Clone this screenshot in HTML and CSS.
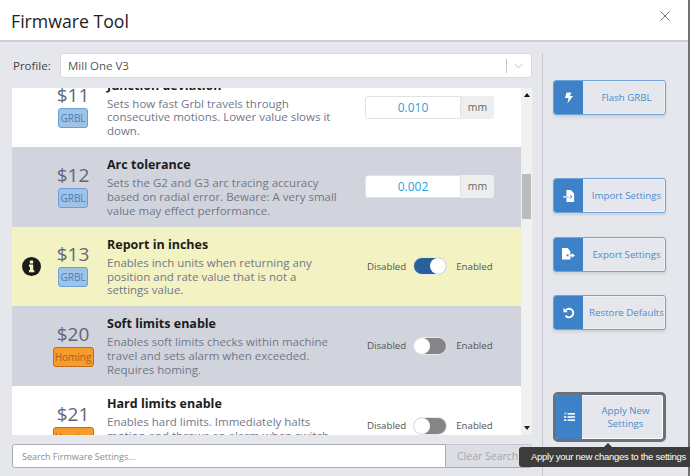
FILE: index.html
```html
<!DOCTYPE html>
<html lang="en">
<head>
<meta charset="utf-8">
<title>Firmware Tool</title>
<link rel="stylesheet" href="styles.css">
</head>
<body>
<div class="window">
  <header class="head">
    <h1>Firmware Tool</h1>
    <svg class="close" viewBox="0 0 11 11" width="10" height="10"><path d="M.5.5l10 10M10.5.5l-10 10" stroke="#666" stroke-width="1" fill="none"/></svg>
  </header>
  <div class="main">
    <section class="left">
      <div class="profile">
        <label>Profile:</label>
        <div class="select">
          <span class="select-text">Mill One V3</span>
          <span class="select-sep"></span>
          <svg viewBox="0 0 10 6" width="9" height="6"><path d="M1 1l4 4 4-4" stroke="#b5b8be" stroke-width="1" fill="none"/></svg>
        </div>
      </div>
      <div class="list">
        <div class="rows">
          <div class="row white">
            <div class="info"></div>
            <div class="code"><span class="num">$11</span><span class="tag grbl">GRBL</span></div>
            <div class="text"><h3>Junction deviation</h3><p>Sets how fast Grbl travels through consecutive motions. Lower value slows it down.</p></div>
            <div class="control"><div class="num-input">0.010</div><div class="unit">mm</div></div>
          </div>
          <div class="row grey">
            <div class="info"></div>
            <div class="code"><span class="num">$12</span><span class="tag grbl">GRBL</span></div>
            <div class="text"><h3>Arc tolerance</h3><p>Sets the G2 and G3 arc tracing accuracy based on radial error. Beware: A very small value may effect performance.</p></div>
            <div class="control"><div class="num-input">0.002</div><div class="unit">mm</div></div>
          </div>
          <div class="row yellow">
            <div class="info"><svg viewBox="0 0 18 18" width="19" height="19"><circle cx="9" cy="9" r="9" fill="#1b1b1b"/><rect x="7.4" y="3.4" width="3.2" height="2.8" rx=".5" fill="#f3f2c2"/><path d="M6.6 7.2h4v5.2h1v2h-5v-2h1v-3.2h-1z" fill="#f3f2c2"/></svg></div>
            <div class="code"><span class="num">$13</span><span class="tag grbl">GRBL</span></div>
            <div class="text"><h3>Report in inches</h3><p>Enables inch units when returning any position and rate value that is not a settings value.</p></div>
            <div class="control switch-row"><span>Disabled</span><span class="switch on"><i></i></span><span>Enabled</span></div>
          </div>
          <div class="row grey">
            <div class="info"></div>
            <div class="code"><span class="num">$20</span><span class="tag homing">Homing</span></div>
            <div class="text"><h3>Soft limits enable</h3><p>Enables soft limits checks within machine travel and sets alarm when exceeded. Requires homing.</p></div>
            <div class="control switch-row"><span>Disabled</span><span class="switch"><i></i></span><span>Enabled</span></div>
          </div>
          <div class="row white">
            <div class="info"></div>
            <div class="code"><span class="num">$21</span><span class="tag homing">Homing</span></div>
            <div class="text"><h3>Hard limits enable</h3><p>Enables hard limits. Immediately halts motion and throws an alarm when switch is triggered.</p></div>
            <div class="control switch-row"><span>Disabled</span><span class="switch"><i></i></span><span>Enabled</span></div>
          </div>
        </div>
        <div class="scrollbar">
          <svg class="arrow-up" viewBox="0 0 6 4" width="6" height="4"><path d="M3 0l3 4H0z" fill="#111"/></svg>
          <div class="thumb"></div>
          <svg class="arrow-down" viewBox="0 0 6 4" width="6" height="4"><path d="M3 4l3-4H0z" fill="#222"/></svg>
        </div>
      </div>
      <div class="search">
        <div class="search-input">Search Firmware Settings...</div>
        <div class="search-clear">Clear Search</div>
      </div>
    </section>
    <aside class="right">
      <button class="btn flash"><span class="ico"><svg viewBox="0 0 10 14" width="8" height="12"><path d="M2 0h6L6.2 4.6H10L3 14l1.4-7H0z" fill="#fff"/></svg></span><span class="lbl">Flash GRBL</span></button>
      <button class="btn import"><span class="ico"><svg viewBox="0 0 14 14" width="12" height="12"><path d="M4 0h5l4 4v10H4V9h4v1.6L11 8 8 5.4V7H4z" fill="#fff"/><path d="M0 7.2h7V5.8L9.6 8 7 10.2V8.8H0z" fill="#fff"/></svg></span><span class="lbl">Import Settings</span></button>
      <button class="btn export"><span class="ico"><svg viewBox="0 0 14 14" width="13" height="13"><path d="M0 0h6l3 3.5V7H4.8v2H9v3.5H0z" fill="#fff"/><path d="M7 6.9h3.6V5.4L14 8l-3.4 2.6V9.1H7z" fill="#fff"/></svg></span><span class="lbl">Export Settings</span></button>
      <button class="btn restore"><span class="ico"><svg viewBox="0 0 14 14" width="12" height="12"><path d="M3.4 3.6A5 5 0 1 1 3 10" stroke="#fff" stroke-width="2.2" fill="none"/><path d="M.6 1v5h5z" fill="#fff"/></svg></span><span class="lbl">Restore Defaults</span></button>
      <button class="btn apply"><span class="ico"><svg viewBox="0 0 14 12" width="11" height="10"><g fill="#fff"><rect x="4.5" y="1" width="9.5" height="2"/><rect x="4.5" y="5" width="9.5" height="2"/><rect x="4.5" y="9" width="9.5" height="2"/><rect x="0" y="5" width="3" height="2"/><rect x="0" y="9" width="3" height="2"/><path d="M0 1.2l1 .8L2.6 0l.7.6L1 3 0 2z"/></g></svg></span><span class="lbl">Apply New Settings</span></button>
    </aside>
  </div>
  <div class="tooltip">Apply your new changes to the settings</div>
</div>
</body>
</html>
```

FILE: styles.css
```css
* { box-sizing: border-box; }
html, body { margin: 0; height: 100%; overflow: hidden; background: #6f7075; }
body { font-family: "Open Sans", sans-serif; color: #222; }
.window { position: relative; width: 688px; height: 476px; display: flex; flex-direction: column; background: #e5e7ec; }
.head { height: 42px; flex: none; background: #fff; border-bottom: 2px solid #cbced4; display: flex; align-items: flex-start; justify-content: space-between; padding: 9px 18px 0 11px; }
.head h1 { margin: 0; font-size: 17.7px; font-weight: 400; line-height: 24px; color: #222; }
.close { margin-top: 2px; }
.main { flex: 1; display: flex; min-height: 0; padding-top: 11px; }
.left { width: 542px; flex: none; padding: 0 10px 0 12px; display: flex; flex-direction: column; }
.profile { height: 25px; display: flex; align-items: center; margin-bottom: 10px; }
.profile label { width: 48px; padding-left: 1px; font-size: 11.5px; color: #444; }
.select { flex: 1; height: 25px; background: #fff; border: 1px solid #d7d9de; border-radius: 3px; display: flex; align-items: center; padding: 0 8px 0 7px; }
.select-text { flex: 1; font-size: 11.5px; color: #555; }
.select-sep { width: 1px; height: 14px; background: #c5c7cc; margin-right: 7px; }
.list { height: 347px; display: flex; overflow: hidden; }
.rows { width: 509px; flex: none; overflow: hidden; }
.rows > .row:first-child { margin-top: -20.6px; }
.row { height: 79.6px; display: flex; align-items: center; }
.white { background: #fff; }
.grey { background: #d1d4dc; }
.yellow { background: #f3f2c2; }
.info { width: 19px; flex: none; margin-left: 10px; display: flex; }
.code { width: 66px; flex: none; display: flex; flex-direction: column; align-items: center; padding: 0 2px 3px 0; }
.num { font-size: 19px; line-height: 25px; color: #5f6776; }
.tag { font-size: 10px; line-height: 18px; height: 20px; border-radius: 3px; border: 1px solid; text-align: center; }
.grbl { width: 30px; background: #9fc2e6; border-color: #6c9fd6; color: #3d82c5; }
.homing { width: 41px; background: #f69b2c; border-color: #c0701a; color: #a5651a; }
.text { width: 233px; flex: none; }
.text h3 { margin: 0 0 3px; font-size: 12.5px; line-height: 17px; font-weight: 700; color: #1c1c1c; }
.text p { margin: 0; font-size: 11.5px; line-height: 13.7px; color: #727789; height: 41px; }
.control { display: flex; align-items: center; margin-left: 25px; }
.num-input { width: 96px; height: 23px; background: #fff; border: 1px solid #e1e2e5; border-radius: 3px 0 0 3px; text-align: center; font-size: 12px; line-height: 21px; color: #2ba0dc; }
.unit { width: 33px; height: 23px; background: #eeeeee; border-radius: 0 3px 3px 0; text-align: center; font-size: 10.5px; line-height: 23px; color: #666; }
.switch-row { margin-left: 27px; font-size: 9.7px; color: #555; }
.switch { width: 34px; height: 18px; border-radius: 9px; margin: 0 9px 0 7px; background: #858585; border: 1px solid #e8e8ea; display: flex; justify-content: flex-start; align-items: center; }
.switch i { width: 16px; height: 16px; border-radius: 50%; background: #fff; }
.switch.on { background: #28609a; justify-content: flex-end; }
.scrollbar { width: 11px; flex: none; background: #f1f1f1; display: flex; flex-direction: column; align-items: center; padding-top: 5px; }
.thumb { width: 9px; height: 45px; background: #bcbcbc; margin-top: 77px; }
.arrow-down { margin-top: auto; margin-bottom: 5px; }
.search { margin-top: 9px; height: 24px; display: flex; }
.search-input { width: 434px; background: #fff; border: 1px solid #a9adb6; border-radius: 3px 0 0 3px; font-size: 9px; line-height: 23px; padding-left: 9px; color: #8d8d8d; }
.search-clear { flex: 1; background: #dcdee3; border: 1px solid #c3c6cd; border-bottom-color: #a9adb6; border-left: 0; border-radius: 0 3px 3px 0; font-size: 10.5px; line-height: 22px; padding-left: 11px; color: #a4a6aa; }
.right { flex: 1; border-left: 1px solid #c5c8ce; padding: 27px 0 0 10px; display: flex; flex-direction: column; height: 423px; }
.btn { width: 113px; height: 35px; flex: none; padding: 0; display: flex; align-items: stretch; background: #e5e7ec; border: 1px solid #6ea4dc; border-radius: 3px; box-shadow: 0 2px 3px rgba(0,0,0,.1), inset 0 0 0 1px #f0f1f4; font-family: inherit; overflow: hidden; }
.btn.flash { margin: 0 0 63px; }
.btn.import { margin: 0 0 24px; }
.btn.export { margin: 0 0 23px; }
.btn.restore { margin: 0 0 62px; }
.ico { width: 29px; flex: none; background: #3d82c8; display: flex; align-items: center; justify-content: center; }
.lbl { flex: 1; align-self: center; font-size: 9.7px; line-height: 13px; color: #4a8dcc; text-align: center; padding-left: 5px; white-space: nowrap; }
.btn.apply { height: 50px; margin: 0; border: 3px solid #6c7078; border-radius: 5px; box-shadow: inset 0 0 0 1px #fff; }
.apply .ico { width: 26px; }
.apply .lbl { white-space: normal; padding: 0 8px 0 14px; }
.tooltip { position: absolute; left: 519px; top: 447px; width: 171px; height: 20px; background: #3c3c3c; border-radius: 3px 0 0 3px; color: #fff; font-family: "Liberation Sans", sans-serif; font-size: 9.5px; letter-spacing: -0.27px; line-height: 20px; padding-left: 12px; white-space: nowrap; }
.tooltip::before { content: ""; position: absolute; left: 85px; top: -4px; border-left: 4px solid transparent; border-right: 4px solid transparent; border-bottom: 4px solid #3c3c3c; }
```
